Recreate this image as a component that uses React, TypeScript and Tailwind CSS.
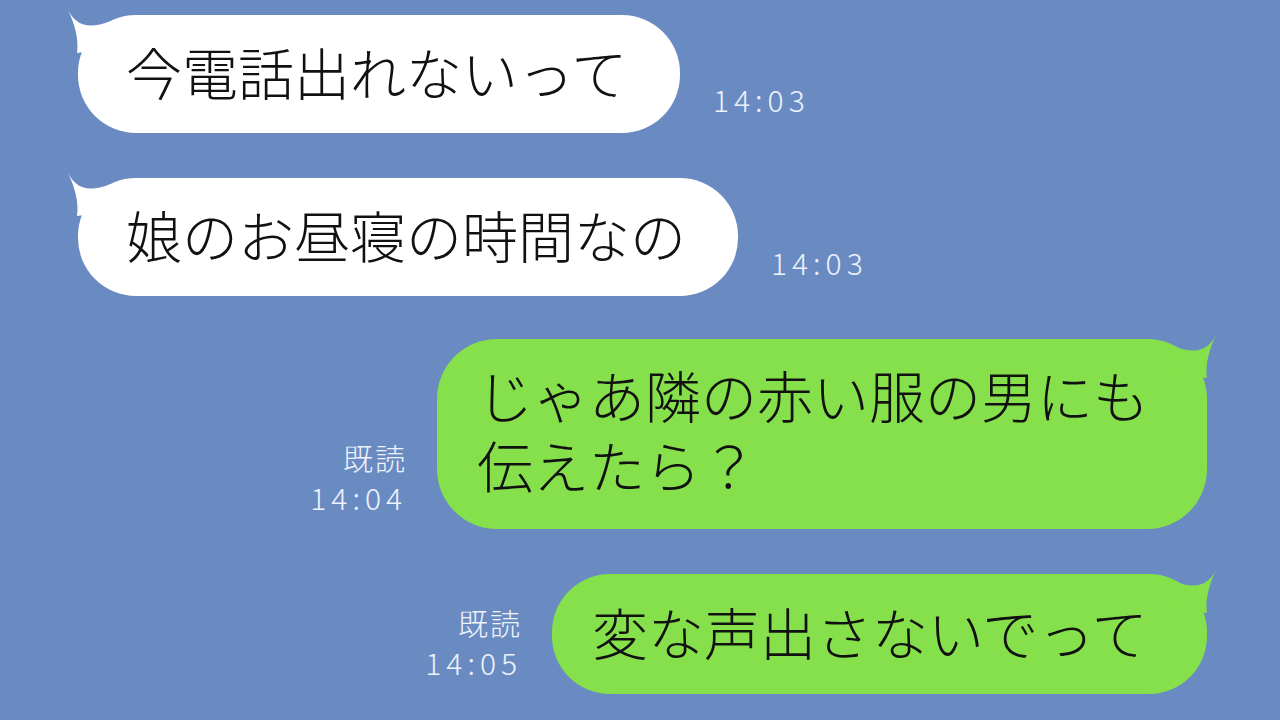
import React from "react";

const jp = { fontFamily: '"Noto Sans CJK JP", "Noto Sans", sans-serif' };

function LeftTail() {
  return (
    <svg className="absolute -left-[11px] -top-[6px]" width="60" height="50" viewBox="0 0 60 50">
      <path d="M1 1 C 8 14, 18 22, 44 12 L 40 40 L 10 44 C 12 30, 8 16, 1 1 Z" fill="#ffffff" />
    </svg>
  );
}

function RightTail() {
  return (
    <svg className="absolute -right-[10px] -top-[5px]" width="60" height="50" viewBox="0 0 60 50">
      <path d="M59 1 C 52 14, 42 22, 16 12 L 20 40 L 50 44 C 48 30, 52 16, 59 1 Z" fill="#86e04b" />
    </svg>
  );
}

function Time({ text, read }: { text: string; read?: boolean }) {
  return (
    <div className="flex flex-col items-end text-[#eef3fb] font-extralight leading-[40px]" style={jp}>
      {read && <span className="text-[30px] tracking-[2px]">既読</span>}
      <span className="text-[30px] tracking-[5px]">{text}</span>
    </div>
  );
}

function LeftRow({ text, time, w }: { text: string; time: string; w: string }) {
  return (
    <div className="flex items-end pl-[78px]">
      <div className={`relative bg-white rounded-[58px] h-[118px] flex items-center pl-[48px] pb-[6px] ${w}`}>
        <LeftTail />
        <span className="relative text-[56px] text-[#111] font-light leading-none" style={jp}>{text}</span>
      </div>
      <div className="ml-[33px] mb-[14px]">
        <Time text={time} />
      </div>
    </div>
  );
}

export default function App() {
  return (
    <div className="w-[1280px] h-[720px] bg-[#6a8bc2] overflow-hidden pt-[15px]">
      <LeftRow text="今電話出れないって" time="14:03" w="w-[602px]" />
      <div className="mt-[45px]">
        <LeftRow text="娘のお昼寝の時間なの" time="14:03" w="w-[660px]" />
      </div>

      <div className="mt-[43px] flex items-end justify-end pr-[73px]">
        <div className="mr-[30px] mb-[12px]">
          <Time text="14:04" read />
        </div>
        <div className="relative bg-[#86e04b] rounded-[60px] w-[770px] h-[190px] flex items-center pl-[40px] pb-[10px]">
          <RightTail />
          <div className="relative flex flex-col text-[56px] text-[#111] font-light leading-[70px]" style={jp}>
            <p>じゃあ隣の赤い服の男にも</p>
            <p>伝えたら？</p>
          </div>
        </div>
      </div>

      <div className="mt-[45px] flex items-end justify-end pr-[73px]">
        <div className="mr-[30px] mb-[12px]">
          <Time text="14:05" read />
        </div>
        <div className="relative bg-[#86e04b] rounded-[58px] w-[655px] h-[120px] flex items-center pl-[40px] pb-[6px]">
          <RightTail />
          <span className="relative text-[56px] text-[#111] font-light leading-none" style={jp}>変な声出さないでって</span>
        </div>
      </div>
    </div>
  );
}
